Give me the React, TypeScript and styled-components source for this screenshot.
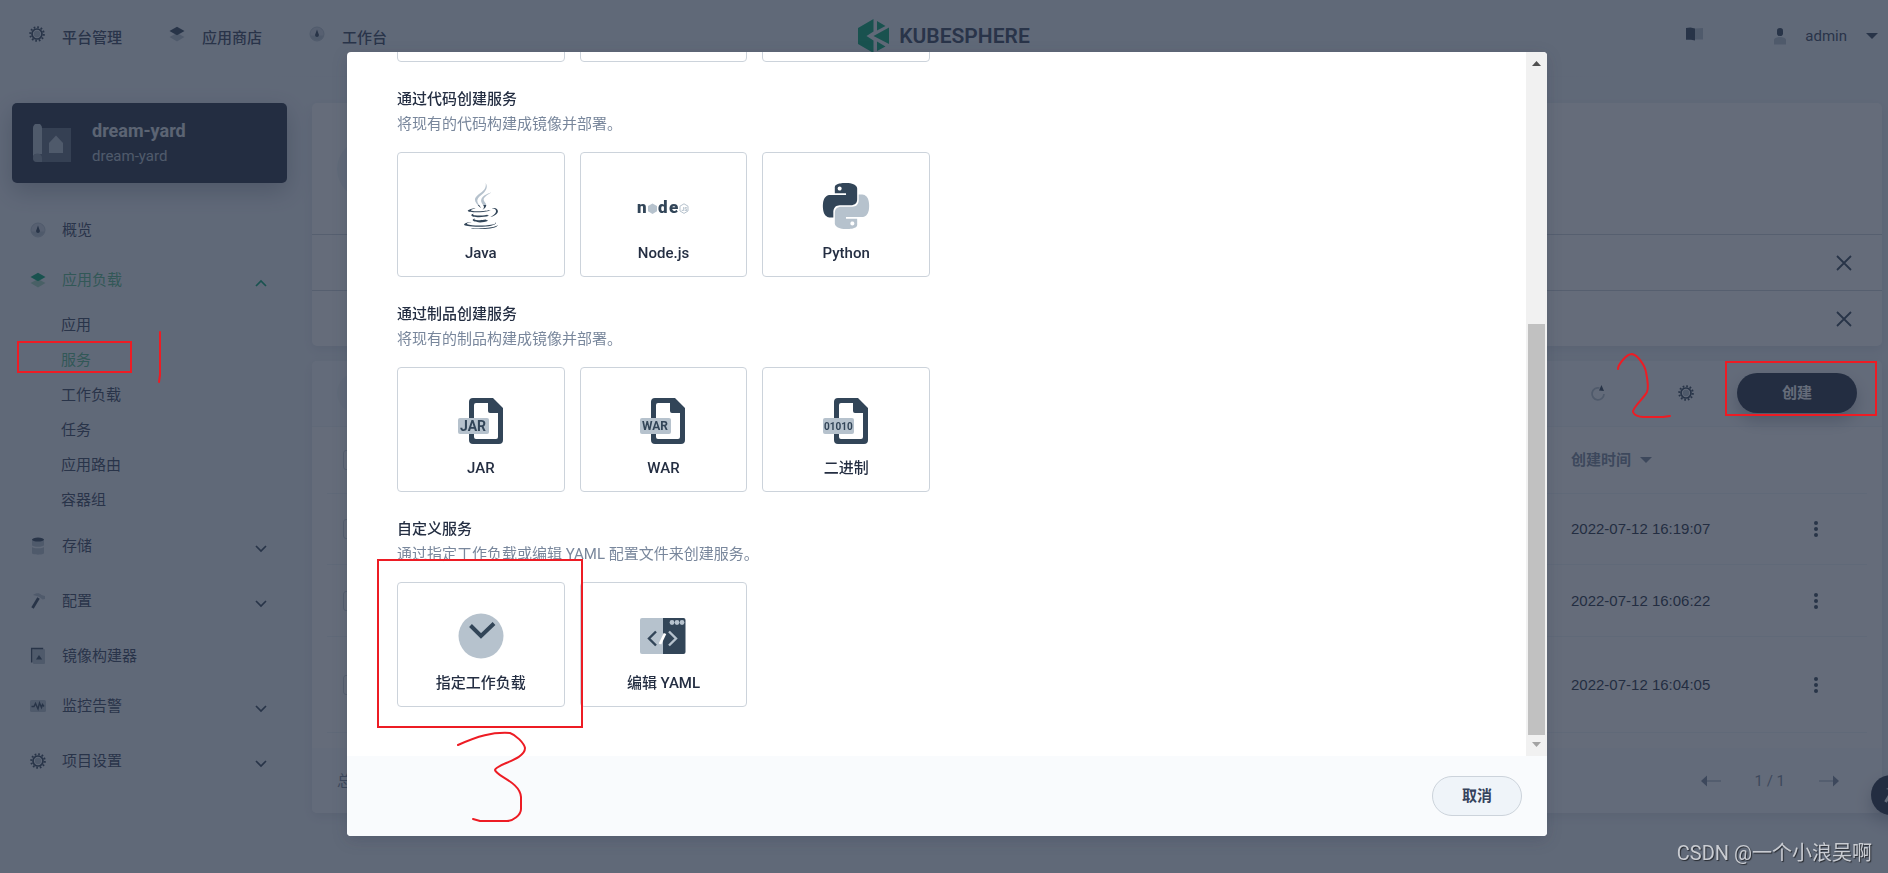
import React from "react";
import styled, { createGlobalStyle } from "styled-components";
import { FaJava } from "react-icons/fa";

const DARK = "#242e42";
const TEXT = "#36435c";
const MUTED = "#79879c";
const LINE = "#ccd3db";
const SOFT = "#eff4f9";
const PALE = "#f9fbfd";
const ICON_DARK = "#324558";
const ICON_LIGHT = "#b6c2cd";
const GREEN = "#55bc8a";
const MARK = "#ed1c24";

const GlobalStyle = createGlobalStyle`
  *, *::before, *::after { box-sizing: border-box; }
  body {
    margin: 0;
    background: ${SOFT};
    color: ${TEXT};
    font-family: Roboto, "Noto Sans CJK SC", sans-serif;
    font-size: 15px;
    line-height: 20px;
  }
  h2, h3, p, ul { margin: 0; padding: 0; }
  ul { list-style: none; }
  svg { display: block; flex: none; }
  a { color: inherit; text-decoration: none; }
  button { font: inherit; color: inherit; cursor: pointer; padding: 0; border: 0; background: none; }
`;

/* ---------- page shell ---------- */

const Page = styled.div`
  position: relative;
  min-height: 100vh;
  overflow: hidden;
`;

const Header = styled.header`
  display: grid;
  grid-template-columns: 1fr auto 1fr;
  height: 77px;
  padding: 0 10px;
  border-bottom: 1px solid;
  border-image: linear-gradient(90deg, transparent 12%, #dde4eb 50%, transparent 88%) 1;
`;

const TopNav = styled.nav`
  display: flex;
  align-items: flex-start;
  gap: 47px;
  padding: 26px 0 0 19px;
`;

const TopLink = styled.a`
  display: flex;
  gap: 17px;
  font-weight: 500;
  line-height: 24px;
`;

const Brand = styled.a`
  display: flex;
  align-items: flex-start;
  gap: 10px;
  padding-top: 19px;
`;

const BrandName = styled.span`
  padding-top: 4px;
  font-size: 21px;
  font-weight: 600;
  line-height: 26px;
`;

const UserArea = styled.div`
  display: flex;
  justify-content: flex-end;
  align-items: flex-start;
  padding-top: 26px;
`;

const DocsButton = styled.button`
  padding-top: 1px;
  margin-right: 70px;
`;

const UserButton = styled.button`
  display: flex;
  align-items: center;
  gap: 19px;
`;

const Columns = styled.div`
  display: flex;
  align-items: flex-start;
  gap: 25px;
  padding: 26px 6px 60px 12px;
`;

/* ---------- side bar ---------- */

const Sidebar = styled.aside`
  flex: none;
  width: 275px;
`;

const ProjectCard = styled.div`
  display: flex;
  align-items: center;
  gap: 21px;
  height: 80px;
  padding: 0 21px;
  border-radius: 5px;
  background: ${DARK};
  color: #b6c2cd;
  box-shadow: 0 8px 24px rgba(36, 46, 66, 0.3);
`;

const ProjectName = styled.h2`
  color: #dfe4e8;
  font-size: 18px;
  font-weight: 700;
  line-height: 26px;
`;

const ProjectAlias = styled.p`
  line-height: 24px;
`;

const Menu = styled.ul`
  padding: 22px 20px 0 18px;
`;

const MenuItem = styled.li<{ $closed: boolean }>`
  margin-bottom: ${(p) => (p.$closed ? 5 : 0)}px;
`;

const MenuLink = styled.a<{ $active?: boolean }>`
  display: flex;
  align-items: center;
  gap: 16px;
  height: 50px;
  color: ${(p) => (p.$active ? GREEN : TEXT)};
`;

const MenuLabel = styled.span`
  flex: 1;
`;

const SubMenu = styled.ul`
  padding: 3px 0 3px 31px;
`;

const SubLink = styled.a<{ $active?: boolean }>`
  display: block;
  line-height: 35px;
  color: ${(p) => (p.$active ? GREEN : TEXT)};
`;

/* ---------- main area ---------- */

const Main = styled.main`
  flex: 1;
  display: flex;
  flex-direction: column;
  gap: 15px;
  min-width: 0;
`;

const Panel = styled.section`
  overflow: hidden;
  border-radius: 5px;
  background: #fff;
  box-shadow: 0 4px 12px rgba(36, 46, 66, 0.1);
`;

const Banner = styled.div`
  display: flex;
  align-items: center;
  height: 131px;
  padding: 0 25px;
`;

const BannerDisc = styled.div`
  width: 60px;
  height: 60px;
  border-radius: 50%;
  background: ${SOFT};
`;

const Tip = styled.div`
  display: flex;
  align-items: center;
  justify-content: flex-end;
  height: 56px;
  padding-right: 29px;
  border-top: 1px solid ${LINE};
`;

const Toolbar = styled.div`
  display: flex;
  align-items: center;
  height: 66px;
  padding: 0 25px 2px;
  border-bottom: 1px solid ${SOFT};
  background: ${PALE};
`;

const Search = styled.input`
  flex: 1;
  min-width: 0;
  height: 40px;
  margin-right: 80px;
  border: 0;
  border-radius: 20px;
  background: ${SOFT};
`;

const ToolButton = styled.button<{ $gap: number }>`
  margin-right: ${(p) => p.$gap}px;
`;

const CreateButton = styled.button`
  width: 120px;
  height: 40px;
  border-radius: 20px;
  background: ${DARK};
  color: #fff;
  font-weight: 700;
  box-shadow: 0 8px 16px rgba(36, 46, 66, 0.3);
`;

const TableWrap = styled.div`
  padding: 0 15px 15px;
`;

const Table = styled.table`
  width: 100%;
  table-layout: fixed;
  border-collapse: separate;
  border-spacing: 0;
  font-family: "Liberation Sans", "Noto Sans CJK SC", sans-serif;
`;

const Row = styled.tr<{ $height: number }>`
  height: ${(p) => p.$height}px;
`;

const HeadCell = styled.th<{ $width?: number }>`
  width: ${(p) => (p.$width ? `${p.$width}px` : "auto")};
  padding: 0;
  border-bottom: 1px solid ${SOFT};
  color: ${MUTED};
  font-weight: 700;
  text-align: left;
`;

const Cell = styled.td`
  padding: 0;
  border-bottom: 1px solid ${SOFT};
  color: ${DARK};
`;

const Check = styled.input`
  display: block;
  appearance: none;
  width: 20px;
  height: 20px;
  margin: 0 0 0 16px;
  border: 1px solid ${LINE};
  border-radius: 3px;
`;

const SortButton = styled.button`
  display: flex;
  align-items: center;
  gap: 9px;
  font-weight: 700;
`;

const MoreButton = styled.button`
  display: block;
  margin-left: 22px;
`;

const PanelFooter = styled.footer`
  display: flex;
  align-items: center;
  justify-content: space-between;
  height: 65px;
  padding: 0 42px 0 25px;
  background: ${PALE};
  color: ${MUTED};
`;

const Pager = styled.div`
  display: flex;
  align-items: center;
  gap: 33px;
`;

const ToolBubble = styled.button`
  position: fixed;
  right: -23px;
  bottom: 58px;
  display: grid;
  place-items: center start;
  width: 40px;
  height: 40px;
  padding-left: 12px;
  border-radius: 50%;
  background: ${DARK};
  box-shadow: 0 8px 16px rgba(36, 46, 66, 0.3);
`;

/* ---------- dialog ---------- */

const Overlay = styled.div`
  position: fixed;
  inset: 0;
  display: flex;
  justify-content: center;
  padding: 52px 0 37px 6px;
  background: rgba(36, 46, 66, 0.7);
`;

const Dialog = styled.div`
  display: flex;
  flex-direction: column;
  width: 100%;
  max-width: 1200px;
  overflow: hidden;
  border-radius: 4px;
  background: #fff;
  box-shadow: 0 4px 16px rgba(36, 46, 66, 0.2);
`;

const DialogBody = styled.div`
  flex: 1;
  display: flex;
  min-height: 0;
`;

const Sections = styled.div`
  flex: 1;
  display: flex;
  flex-direction: column;
  justify-content: flex-end;
  gap: 25px;
  overflow: hidden;
  padding: 0 50px 49px;
`;

const SectionTitle = styled.h3`
  color: ${DARK};
  font-size: 15px;
  font-weight: 500;
  line-height: 24px;
`;

const SectionText = styled.p`
  margin-bottom: 14px;
  color: ${MUTED};
  line-height: 27px;
`;

const Cards = styled.div`
  display: grid;
  grid-template-columns: repeat(3, 1fr);
  gap: 15px;
  max-width: 533px;
`;

const Card = styled.button`
  display: flex;
  flex-direction: column;
  align-items: center;
  gap: 13px;
  height: 125px;
  padding-top: 29px;
  border: 1px solid ${LINE};
  border-radius: 4px;
  background: #fff;
  color: ${DARK};
  font-weight: 500;
`;

const ScrollTrack = styled.div`
  display: flex;
  flex-direction: column;
  align-items: center;
  width: 21px;
  padding: 9px 0;
  background: #f1f1f1;
`;

const ScrollSpace = styled.div`
  flex: 258;
`;

const ScrollThumb = styled.div`
  flex: 411;
  width: 17px;
  margin-bottom: 7px;
  background: #c1c1c1;
`;

const DialogFooter = styled.footer`
  display: flex;
  align-items: center;
  justify-content: flex-end;
  height: 80px;
  padding: 0 25px;
  background: ${PALE};
`;

const CancelButton = styled.button`
  width: 90px;
  height: 40px;
  border: 1px solid ${LINE};
  border-radius: 20px;
  background: ${SOFT};
  color: ${TEXT};
  font-weight: 700;
`;

/* ---------- marks over the page ---------- */

const Marks = styled.svg`
  position: fixed;
  top: 0;
  left: 0;
  fill: none;
  stroke: ${MARK};
  stroke-width: 2;
  stroke-linecap: round;
  stroke-linejoin: round;
  pointer-events: none;
`;

const Watermark = styled.p`
  position: fixed;
  right: 16px;
  bottom: 6px;
  color: #c9ccd2;
  font-size: 20px;
  line-height: 28px;
  text-shadow: 1px 1px 1px rgba(0, 0, 0, 0.6);
`;

/* ---------- icons ---------- */

const GearIcon = () => (
  <svg width="16" height="16" viewBox="0 0 16 16" fill="none">
    <circle cx="8" cy="8" r="3.2" fill={ICON_LIGHT} />
    <circle cx="8" cy="8" r="5" stroke={ICON_DARK} strokeWidth="1.700" />
    <circle cx="8" cy="8" r="6.8" stroke={ICON_DARK} strokeWidth="2" strokeDasharray="1.7 1.86" />
  </svg>
);

const LayersIcon = ({ active = false }: { active?: boolean }) => (
  <svg width="16" height="16" viewBox="0 0 16 16">
    <path d="M.5 11 8 7l7.500 4L8 15.500z" fill={active ? "#a2d8bb" : ICON_LIGHT} />
    <path d="M.5 5 8 .8 15.500 5 8 9.200z" fill={active ? "#00a971" : ICON_DARK} />
  </svg>
);

const GaugeIcon = () => (
  <svg width="16" height="16" viewBox="0 0 16 16">
    <circle cx="8" cy="8" r="7" fill="#cfd8e0" stroke={ICON_LIGHT} strokeWidth="1" />
    <path d="M1.500 9.500h13A6.800 6.800 0 0 1 1.500 9.500z" fill={ICON_LIGHT} />
    <path d="M8 3.500 9.800 8.500a1.900 1.900 0 1 1-3.600 0z" fill={ICON_DARK} />
  </svg>
);

const StorageIcon = () => (
  <svg width="16" height="18" viewBox="0 0 16 18">
    <path d="M2 2.500v5.500c0 2.400 12 2.400 12 0V2.500zM2 10v6c0 2.200 12 2.200 12 0v-6c-1 1.800-11 1.800-12 0z" fill={ICON_LIGHT} />
    <ellipse cx="8" cy="2.600" rx="6" ry="2" fill={ICON_DARK} />
  </svg>
);

const HammerIcon = ({ handle = ICON_DARK }: { handle?: string }) => (
  <svg width="16" height="16" viewBox="0 0 16 16" fill="none">
    <path d="M2.500 15 8.500 5" stroke={handle} strokeWidth="2.800" />
    <path d="M3 2C6-.5 10 0 11.500 2l3.500 1v3l-2.500.5L9 3.800z" fill={ICON_LIGHT} />
  </svg>
);

const BuilderIcon = () => (
  <svg width="16" height="18" viewBox="0 0 16 18" fill="none">
    <rect x="3" y="2" width="12" height="15" rx="1" fill={ICON_LIGHT} />
    <path d="M1.700 15.500V1.500h11.500" stroke={ICON_DARK} strokeWidth="1.500" />
    <path d="m6 12.500 3-4.500 3.200 4.500z" fill={ICON_DARK} />
  </svg>
);

const PulseIcon = () => (
  <svg width="16" height="16" viewBox="0 0 16 16" fill="none">
    <rect y="2" width="16" height="12" rx="1.500" fill={ICON_LIGHT} />
    <path d="M1.500 8.500h2.500L5.500 5.500 8 11l1.500-6 2 4.500 1-3 1.500 2" stroke={ICON_DARK} strokeWidth="1.400" />
  </svg>
);

const ChevronIcon = ({ up = false }: { up?: boolean }) => (
  <svg width="12" height="16" viewBox="0 0 12 16" fill="none">
    <path d={up ? "M1 14 6 9l5 5" : "M1 8l5 5 5-5"} stroke={up ? "#00a971" : ICON_DARK} strokeWidth="1.700" />
  </svg>
);

const CaretIcon = ({ color }: { color: string }) => (
  <svg width="12" height="6" viewBox="0 0 12 6">
    <path d="M0 0h12L6 6z" fill={color} />
  </svg>
);

const BookIcon = () => (
  <svg width="18" height="14" viewBox="0 0 18 14">
    <path d="M9 1.500 17 1v11.500H9z" fill={ICON_LIGHT} />
    <path d="M0 1 4.500.5 9 1.500V13.500L5 12.800H0z" fill={ICON_DARK} />
  </svg>
);

const UserIcon = () => (
  <svg width="12" height="17" viewBox="0 0 12 17">
    <path d="M0 12c0-4 12-4 12 0v4.500H0z" fill={ICON_LIGHT} />
    <rect x="3" y="0" width="6" height="8" rx="2.800" fill={ICON_DARK} />
  </svg>
);

const BrandMark = () => (
  <svg width="31" height="34" viewBox="0 0 31 34" fill="#00a971">
    <path d="M0 9 15.500 0v12.500L8.500 17l7 4.500V34L0 25z" />
    <path d="M19 2l8.500 5L19 11.500zM15.500 17 31 8.500v16.500zM19 22.500 27.500 27.500 19 32z" />
  </svg>
);

const ProjectIcon = () => (
  <svg width="38" height="38" viewBox="0 0 38 38">
    <path d="M8 4h30v34H4a4 4 0 0 1 0-8h4z" fill="#5f6b7c" />
    <path d="M0 34V4a4 4 0 0 1 9 0v26H4a4 4 0 0 0-4 4z" fill="#b6c2cd" />
    <path d="M0 34a4.500 4.500 0 0 1 9 0v4H4a4 4 0 0 1-4-4z" fill="#8a96a3" />
    <path d="M16 19l7-7.500 7 7.500v10H16z" fill="#b6c2cd" />
  </svg>
);

const CloseIcon = () => (
  <svg width="18" height="18" viewBox="0 0 18 18" fill="none">
    <path d="m2 2 14 14M16 2 2 16" stroke={ICON_DARK} strokeWidth="1.800" />
  </svg>
);

const RefreshIcon = () => (
  <svg width="16" height="18" viewBox="0 0 16 18" fill="none">
    <path d="M9.500 4A6 6 0 1 0 14 10" stroke={ICON_LIGHT} strokeWidth="1.800" />
    <path d="m11.500 1 2.500 6-5-.5z" fill={ICON_DARK} />
  </svg>
);

const MoreIcon = () => (
  <svg width="6" height="18" viewBox="0 0 6 18" fill={ICON_DARK}>
    <circle cx="3" cy="3" r="2" />
    <circle cx="3" cy="9" r="2" />
    <circle cx="3" cy="15" r="2" />
  </svg>
);

const ArrowIcon = ({ right = false }: { right?: boolean }) => (
  <svg width="22" height="12" viewBox="0 0 22 12">
    <path d={right ? "M1 5.200h15v1.600H1z" : "M6 5.200h15v1.600H6z"} fill={ICON_LIGHT} />
    <path d={right ? "M15 .5 21 6l-6 5.500z" : "M7 .5 1 6l6 5.500z"} fill={MUTED} />
  </svg>
);

const JavaIcon = () => (
  <svg width="48" height="48" viewBox="0 0 48 48">
    <linearGradient id="java-tone" gradientUnits="userSpaceOnUse" x1="0" y1="0" x2="0" y2="512">
      <stop offset="0.48" stopColor={ICON_LIGHT} />
      <stop offset="0.48" stopColor={ICON_DARK} />
    </linearGradient>
    <FaJava x="1" y="1" size={46} fill="url(#java-tone)" />
  </svg>
);

const NodeIcon = () => (
  <svg width="52" height="48" viewBox="0 0 52 48" fill={ICON_DARK} fontFamily="Roboto, sans-serif" fontSize="17" fontWeight="900">
    <text x="0" y="31">n</text>
    <path d="m15.500 21.500 4.500 2.600v5.200l-4.500 2.600-4.500-2.600v-5.200z" fill={ICON_LIGHT} />
    <text x="21" y="31">d</text>
    <text x="32" y="31">e</text>
    <path d="m47 21.800 4 2.400v4.800l-4 2.400-4-2.400v-4.800z" fill="none" stroke={ICON_LIGHT} />
    <text x="44.500" y="29" fontSize="5" fill={ICON_LIGHT}>JS</text>
  </svg>
);

const PythonIcon = () => (
  <svg width="48" height="48" viewBox="-0.5 -0.5 25 25">
    <path
      fill={ICON_DARK}
      d="M14.250.18l.9.2.73.26.59.3.45.32.34.34.25.34.16.33.1.3.04.26.02.2-.01.13V8.500l-.05.63-.13.55-.21.46-.26.38-.3.31-.33.25-.35.19-.35.14-.33.1-.3.07-.26.04-.21.02H8.770l-.69.05-.59.14-.5.22-.41.27-.33.32-.27.35-.2.36-.15.37-.1.35-.07.32-.04.27-.02.21v3.060H3.170l-.21-.03-.28-.07-.32-.12-.35-.18-.36-.26-.36-.36-.35-.46-.32-.59-.28-.73-.21-.88-.14-1.050-.05-1.230.06-1.220.16-1.040.24-.87.32-.71.36-.57.4-.44.42-.33.42-.24.4-.16.36-.1.32-.05.24-.01h.16l.06.01h8.160v-.83H6.180l-.01-2.750-.02-.37.05-.34.11-.31.17-.28.25-.26.31-.23.38-.2.44-.18.51-.15.58-.12.64-.1.71-.06.77-.04.84-.02 1.270.05zm-6.300 1.980l-.23.33-.08.41.08.41.23.34.33.22.41.09.41-.09.33-.22.23-.34.08-.41-.08-.41-.23-.33-.33-.22-.41-.09-.41.09z"
    />
    <path
      fill={ICON_LIGHT}
      d="M21.040 6.110l.28.06.32.12.35.18.36.27.36.35.35.47.32.59.28.73.21.88.14 1.040.05 1.230-.06 1.230-.16 1.040-.24.86-.32.71-.36.57-.4.45-.42.33-.42.24-.4.16-.36.09-.32.05-.24.02-.16-.01h-8.220v.82h5.840l.01 2.760.02.36-.05.34-.11.31-.17.29-.25.25-.31.24-.38.2-.44.17-.51.15-.58.13-.64.09-.71.07-.77.04-.84.01-1.270-.04-1.070-.14-.9-.2-.73-.25-.59-.3-.45-.33-.34-.34-.25-.34-.16-.33-.1-.3-.04-.25-.02-.2.01-.13v-5.340l.05-.64.13-.54.21-.46.26-.38.3-.32.33-.24.35-.2.35-.14.33-.1.3-.06.26-.04.21-.02.13-.01h5.840l.69-.05.59-.14.5-.21.41-.28.33-.32.27-.35.2-.36.15-.36.1-.35.07-.32.04-.28.02-.21V6.070h2.090l.14.01zm-6.470 14.250l-.23.33-.08.41.08.41.23.33.33.23.41.08.41-.08.33-.23.23-.33.08-.41-.08-.41-.23-.33-.33-.23-.41-.08-.41.08z"
    />
  </svg>
);

const FileIcon = ({ label, size, x }: { label: string; size: number; x: number }) => (
  <svg width="48" height="48" viewBox="0 0 48 48">
    <path
      fill={ICON_DARK}
      fillRule="evenodd"
      d="M16 1h20l10 10v32a4 4 0 0 1-4 4H16a4 4 0 0 1-4-4V5a4 4 0 0 1 4-4zm3 5a2 2 0 0 0-2 2v32a2 2 0 0 0 2 2h20a2 2 0 0 0 2-2V16h-8a2 2 0 0 1-2-2V6z"
    />
    <rect x="1" y="21" width="31" height="16" rx="2" fill={ICON_LIGHT} />
    <text x={x} y={29 + size * 0.36} fill={ICON_DARK} fontFamily="Roboto, sans-serif" fontSize={size} fontWeight="700">
      {label}
    </text>
  </svg>
);

const WorkloadIcon = () => (
  <svg width="48" height="48" viewBox="0 0 48 48" fill="none">
    <circle cx="24" cy="24" r="22.500" fill={ICON_LIGHT} />
    <path d="m13.500 13.500 10.500 10.500L37 11.500" stroke={ICON_DARK} strokeWidth="4" />
  </svg>
);

const YamlIcon = () => (
  <svg width="48" height="48" viewBox="0 0 48 48" fill="none">
    <path d="M3 6h21v36H3a2 2 0 0 1-2-2V8a2 2 0 0 1 2-2z" fill={ICON_LIGHT} />
    <path d="M24 6h20.500a2 2 0 0 1 2 2v32a2 2 0 0 1-2 2H24z" fill={ICON_DARK} />
    <g fill={ICON_LIGHT}>
      <circle cx="33" cy="10.500" r="2.400" />
      <circle cx="38" cy="10.500" r="2.400" />
      <circle cx="43" cy="10.500" r="2.400" />
    </g>
    <path d="M17 19.500 10 26.500l7 7" stroke={ICON_DARK} strokeWidth="2.400" />
    <path d="m30 19.500 7 7-7 7" stroke={ICON_LIGHT} strokeWidth="2.400" />
    <path d="M26 21.500 21 32" stroke="#fff" strokeWidth="2.800" />
  </svg>
);

const ScrollArrow = ({ down = false }: { down?: boolean }) => (
  <svg width="9" height="5" viewBox="0 0 9 5">
    <path d={down ? "M0 0h9L4.500 5z" : "M0 5h9L4.500 0z"} fill={down ? "#a3a3a3" : "#505050"} />
  </svg>
);

/* ---------- data ---------- */

type MenuEntry = {
  label: string;
  icon: React.ReactNode;
  group?: boolean;
  open?: boolean;
  items?: string[];
};

const menu: MenuEntry[] = [
  { label: "概览", icon: <GaugeIcon /> },
  {
    label: "应用负载",
    icon: <LayersIcon active />,
    group: true,
    open: true,
    items: ["应用", "服务", "工作负载", "任务", "应用路由", "容器组"],
  },
  { label: "存储", icon: <StorageIcon />, group: true },
  { label: "配置", icon: <HammerIcon />, group: true },
  { label: "镜像构建器", icon: <BuilderIcon /> },
  { label: "监控告警", icon: <PulseIcon />, group: true },
  { label: "项目设置", icon: <GearIcon />, group: true },
];

const rows = [
  { time: "2022-07-12 16:19:07", height: 71 },
  { time: "2022-07-12 16:06:22", height: 72 },
  { time: "2022-07-12 16:04:05", height: 96 },
];

const sections = [
  {
    title: "通过代码创建服务",
    text: "将现有的代码构建成镜像并部署。",
    cards: [
      { label: "Java", icon: <JavaIcon /> },
      { label: "Node.js", icon: <NodeIcon /> },
      { label: "Python", icon: <PythonIcon /> },
    ],
  },
  {
    title: "通过制品创建服务",
    text: "将现有的制品构建成镜像并部署。",
    cards: [
      { label: "JAR", icon: <FileIcon label="JAR" size={14} x={3} /> },
      { label: "WAR", icon: <FileIcon label="WAR" size={12} x={3} /> },
      { label: "二进制", icon: <FileIcon label="01010" size={10} x={2} /> },
    ],
  },
  {
    title: "自定义服务",
    text: "通过指定工作负载或编辑 YAML 配置文件来创建服务。",
    cards: [
      { label: "指定工作负载", icon: <WorkloadIcon /> },
      { label: "编辑 YAML", icon: <YamlIcon /> },
    ],
  },
];

export default function App() {
  return (
    <Page>
      <GlobalStyle />
      <Header>
        <TopNav>
          <TopLink href="#platform"><GearIcon />平台管理</TopLink>
          <TopLink href="#store"><LayersIcon />应用商店</TopLink>
          <TopLink href="#workbench"><GaugeIcon />工作台</TopLink>
        </TopNav>
        <Brand href="#home">
          <BrandMark />
          <BrandName>KUBESPHERE</BrandName>
        </Brand>
        <UserArea>
          <DocsButton aria-label="文档"><BookIcon /></DocsButton>
          <UserButton>
            <UserIcon />
            admin
            <CaretIcon color={ICON_DARK} />
          </UserButton>
        </UserArea>
      </Header>

      <Columns>
        <Sidebar>
          <ProjectCard>
            <ProjectIcon />
            <div>
              <ProjectName>dream-yard</ProjectName>
              <ProjectAlias>dream-yard</ProjectAlias>
            </div>
          </ProjectCard>
          <Menu>
            {menu.map((entry) => (
              <MenuItem key={entry.label} $closed={Boolean(entry.group && !entry.open)}>
                <MenuLink href={`#${entry.label}`} $active={entry.open}>
                  {entry.icon}
                  <MenuLabel>{entry.label}</MenuLabel>
                  {entry.group && <ChevronIcon up={entry.open} />}
                </MenuLink>
                {entry.items && (
                  <SubMenu>
                    {entry.items.map((item) => (
                      <li key={item}>
                        <SubLink href={`#${item}`} $active={item === "服务"}>{item}</SubLink>
                      </li>
                    ))}
                  </SubMenu>
                )}
              </MenuItem>
            ))}
          </Menu>
        </Sidebar>

        <Main>
          <Panel>
            <Banner><BannerDisc /></Banner>
            <Tip><button aria-label="关闭"><CloseIcon /></button></Tip>
            <Tip><button aria-label="关闭"><CloseIcon /></button></Tip>
          </Panel>
          <Panel>
            <Toolbar>
              <Search aria-label="搜索" />
              <ToolButton $gap={72} aria-label="刷新"><RefreshIcon /></ToolButton>
              <ToolButton $gap={43} aria-label="设置"><GearIcon /></ToolButton>
              <CreateButton>创建</CreateButton>
            </Toolbar>
            <TableWrap>
              <Table>
                <thead>
                  <Row $height={67}>
                    <HeadCell><Check type="checkbox" aria-label="全选" /></HeadCell>
                    <HeadCell $width={220}>
                      <SortButton>创建时间<CaretIcon color={MUTED} /></SortButton>
                    </HeadCell>
                    <HeadCell $width={76} />
                  </Row>
                </thead>
                <tbody>
                  {rows.map((row) => (
                    <Row key={row.time} $height={row.height}>
                      <Cell><Check type="checkbox" aria-label={row.time} /></Cell>
                      <Cell>{row.time}</Cell>
                      <Cell><MoreButton aria-label="更多"><MoreIcon /></MoreButton></Cell>
                    </Row>
                  ))}
                </tbody>
              </Table>
            </TableWrap>
            <PanelFooter>
              <span>总数</span>
              <Pager>
                <button aria-label="上一页"><ArrowIcon /></button>
                1 / 1
                <button aria-label="下一页"><ArrowIcon right /></button>
              </Pager>
            </PanelFooter>
          </Panel>
        </Main>
      </Columns>

      <ToolBubble aria-label="工具箱"><HammerIcon handle="#ffffff" /></ToolBubble>

      <Overlay>
        <Dialog role="dialog" aria-modal="true">
          <DialogBody>
            <Sections>
              <Cards><Card /><Card /><Card /></Cards>
              {sections.map((section) => (
                <section key={section.title}>
                  <SectionTitle>{section.title}</SectionTitle>
                  <SectionText>{section.text}</SectionText>
                  <Cards>
                    {section.cards.map((card) => (
                      <Card key={card.label}>
                        {card.icon}
                        {card.label}
                      </Card>
                    ))}
                  </Cards>
                </section>
              ))}
            </Sections>
            <ScrollTrack>
              <ScrollArrow />
              <ScrollSpace />
              <ScrollThumb />
              <ScrollArrow down />
            </ScrollTrack>
          </DialogBody>
          <DialogFooter>
            <CancelButton>取消</CancelButton>
          </DialogFooter>
        </Dialog>
      </Overlay>

      <Marks width="1888" height="873" viewBox="0 0 1888 873" aria-hidden="true">
        <g strokeLinejoin="miter">
          <rect x="18" y="342" width="113" height="30" />
          <rect x="1726" y="362" width="150" height="53" />
          <rect x="378" y="560" width="204" height="167" />
        </g>
        <path d="M160 332v43l-1 7" />
        <path d="M1618 369c0-4 8-15 14-15 6 1 13 12 14 18 2 10 3 16 1 20-3 6-15 16-14 20 1 3 6 5 10 5h20l7-1" />
        <path d="M458 745c20-9 34-13 52-12 6 2 14 10 15 15 0 12-29 16-30 22 1 6 25 12 26 27v12c0 6-8 12-14 12h-27l-7-2" />
      </Marks>
      <Watermark>CSDN @一个小浪吴啊</Watermark>
    </Page>
  );
}
